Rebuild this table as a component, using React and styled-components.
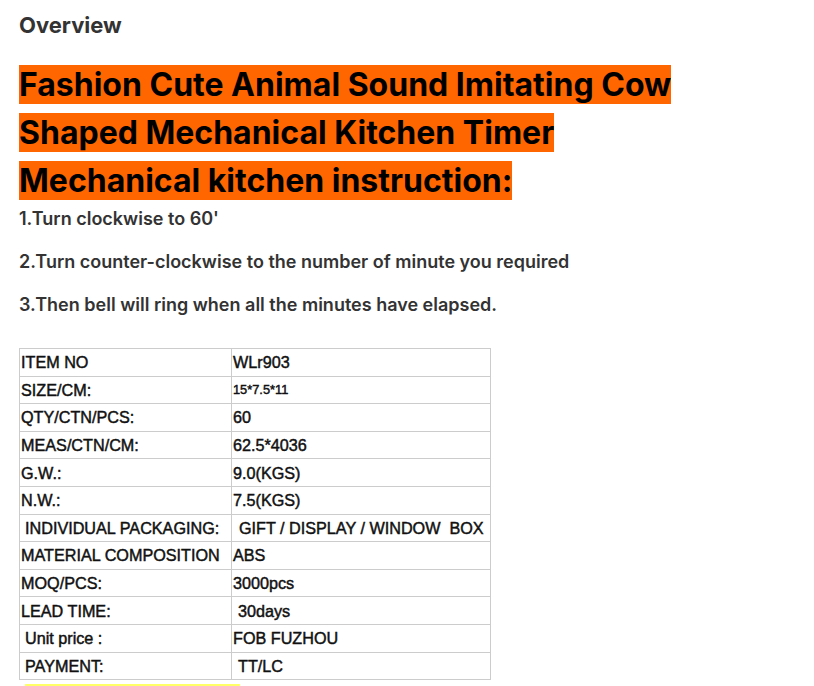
import React from 'react';
import styled, { createGlobalStyle } from 'styled-components';

const GlobalStyle = createGlobalStyle`
  html, body {
    margin: 0;
    padding: 0;
    background: #ffffff;
  }
  body {
    font-family: Inter, 'Noto Sans', sans-serif;
  }
`;

const Page = styled.div`
  padding: 10px 19px 0;
  height: 686px;
  overflow: hidden;
  box-sizing: border-box;
`;

const SectionTitle = styled.h2`
  margin: 0;
  font-size: 22px;
  line-height: 30px;
  font-weight: 700;
  color: #333333;
`;

const Headline = styled.h1`
  margin: 21px 0 0;
  font-size: 32px;
  line-height: 48px;
  font-weight: 700;
  color: #000000;
  max-width: 700px;
`;

const Highlight = styled.span`
  background: ${(p) => p.$color || '#ff6600'};
`;

const Step = styled.p`
  margin: 0 0 16px;
  padding-top: 1px;
  font-size: 18px;
  line-height: 26px;
  font-weight: 600;
  color: #333333;
`;

const SpecTable = styled.table`
  margin-top: 30px;
  border-collapse: collapse;
  width: 472px;
  font-family: 'Liberation Sans', Arial, sans-serif;
  color: #111111;
`;

const Row = styled.tr`
  height: 27.6px;
`;

const Cell = styled.td`
  border: 1px solid #cccccc;
  padding: 0 0 0 ${(p) => p.$indent || 1}px;
  font-size: ${(p) => (p.$small ? 12.8 : 16.2)}px;
  line-height: 18px;
  white-space: nowrap;
  vertical-align: middle;
  -webkit-text-stroke: 0.45px #111;
  width: ${(p) => p.$w || 'auto'};
`;

const NextNote = styled.p`
  margin: 1px 0 0 6px;
  font-size: 17px;
  line-height: 26px;
`;

const specs = [
  { k: 'ITEM NO', v: 'WLr903' },
  { k: 'SIZE/CM:', v: '15*7.5*11', small: true },
  { k: 'QTY/CTN/PCS:', v: '60' },
  { k: 'MEAS/CTN/CM:', v: '62.5*4036' },
  { k: 'G.W.:', v: '9.0(KGS)' },
  { k: 'N.W.:', v: '7.5(KGS)' },
  { k: 'INDIVIDUAL PACKAGING:', v: 'GIFT / DISPLAY / WINDOW\u00a0 BOX', ki: 5, vi: 7 },
  { k: 'MATERIAL COMPOSITION', v: 'ABS' },
  { k: 'MOQ/PCS:', v: '3000pcs' },
  { k: 'LEAD TIME:', v: '30days', vi: 6 },
  { k: 'Unit price :', v: 'FOB FUZHOU', ki: 5 },
  { k: 'PAYMENT:', v: 'TT/LC', ki: 5, vi: 6 },
];

const App = () => (
  <>
    <GlobalStyle />
    <Page>
      <SectionTitle>Overview</SectionTitle>
      <Headline>
        <Highlight>Fashion Cute Animal Sound Imitating Cow Shaped Mechanical Kitchen Timer</Highlight>
        <br />
        <Highlight>Mechanical kitchen instruction:</Highlight>
      </Headline>
      <Step>1.Turn clockwise to 60'</Step>
      <Step>2.Turn counter-clockwise to the number of minute you required</Step>
      <Step>3.Then bell will ring when all the minutes have elapsed.</Step>
      <SpecTable>
        <tbody>
          {specs.map((s) => (
            <Row key={s.k}>
              <Cell $w="206px" $indent={s.ki}>{s.k}</Cell>
              <Cell $indent={s.vi} $small={s.small}>{s.v}</Cell>
            </Row>
          ))}
        </tbody>
      </SpecTable>
      <NextNote>
        <Highlight $color="#ffff66">&nbsp;&nbsp;&nbsp;&nbsp;&nbsp;&nbsp;&nbsp;&nbsp;&nbsp;&nbsp;&nbsp;&nbsp;&nbsp;&nbsp;&nbsp;&nbsp;&nbsp;&nbsp;&nbsp;&nbsp;&nbsp;&nbsp;&nbsp;&nbsp;&nbsp;&nbsp;&nbsp;&nbsp;&nbsp;&nbsp;&nbsp;&nbsp;&nbsp;&nbsp;&nbsp;&nbsp;&nbsp;&nbsp;&nbsp;&nbsp;&nbsp;&nbsp;&nbsp;&nbsp;&nbsp;</Highlight>
      </NextNote>
    </Page>
  </>
);

export default App;
